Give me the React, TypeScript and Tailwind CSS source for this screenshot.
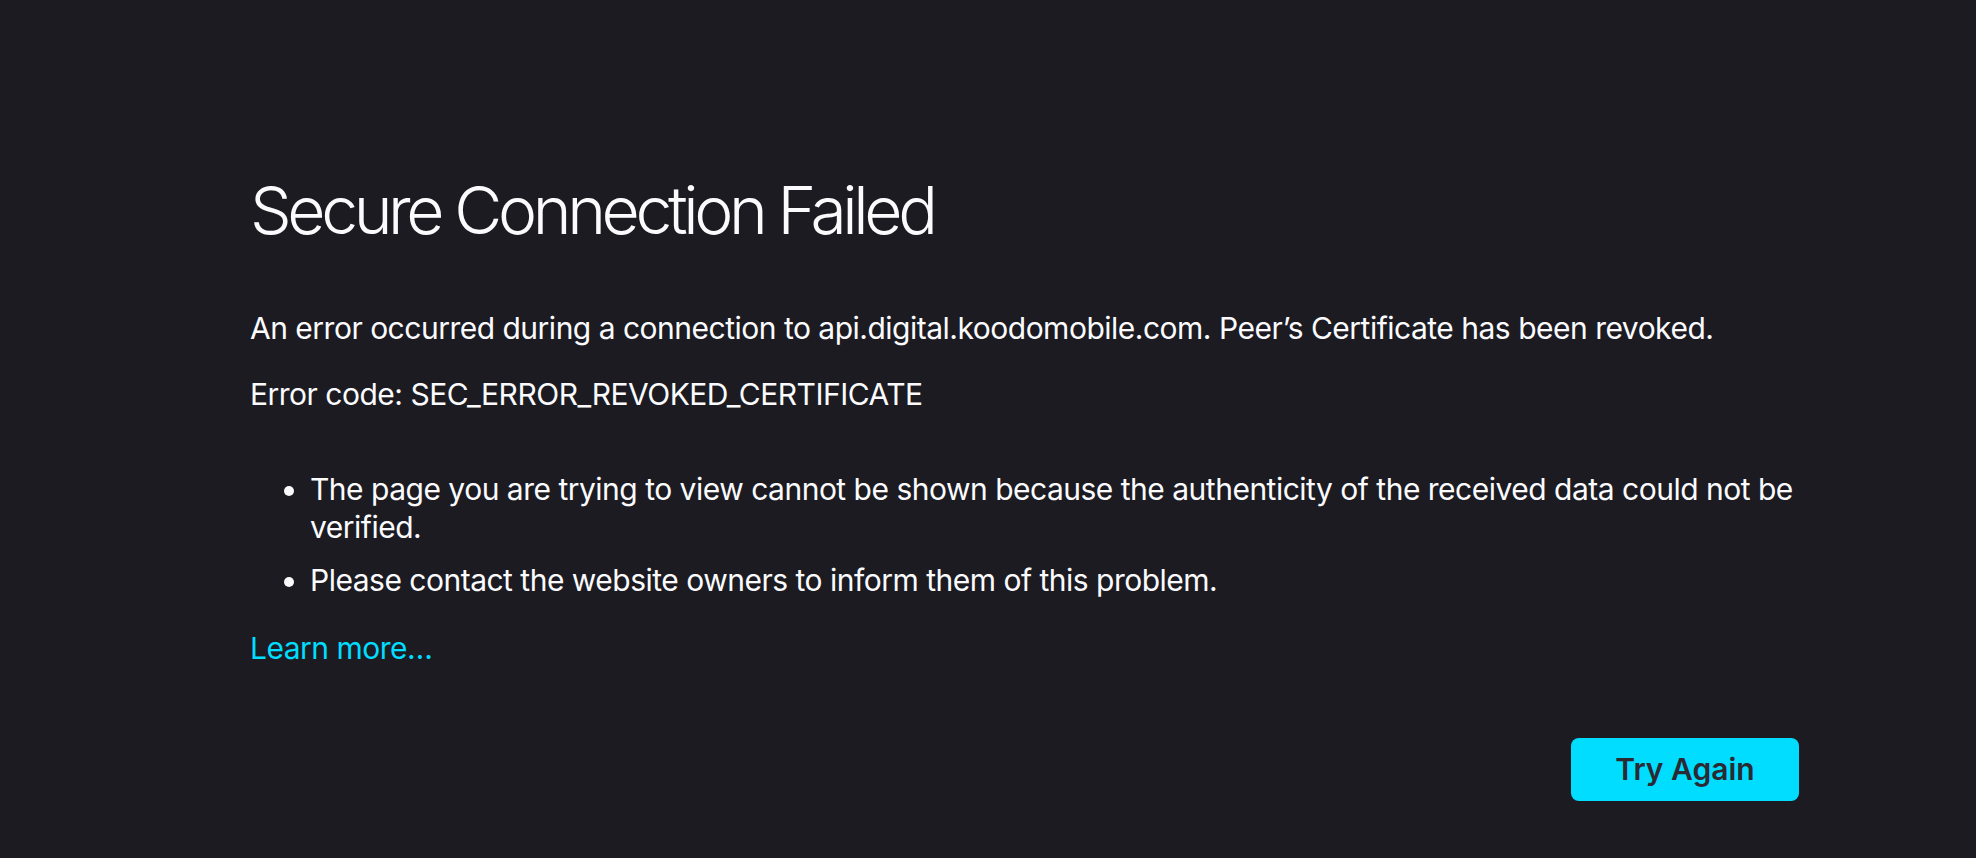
export default function App() {
  return (
    <div className="min-h-screen bg-[#1c1b22] text-[#fbfbfe] font-['Inter','Noto_Sans',sans-serif]">
      <div className="w-[1549px] ml-[250px] pt-[177px] pb-10">
        {/* Title */}
        <h1 className="text-[66px] font-light leading-none tracking-[-4.4px]">Secure Connection Failed</h1>

        <div className="text-[30px] leading-[1.25] tracking-[-0.5px]">
          <p className="mt-[67px] whitespace-nowrap">
            An error occurred during a connection to api.digital.koodomobile.com. Peer’s Certificate has been revoked.
          </p>
          <p className="mt-[28px]">Error code: SEC_ERROR_REVOKED_CERTIFICATE</p>

          <ul className="mt-[58px] pl-[60px] list-disc">
            <li>
              <span className="whitespace-nowrap">
                The page you are trying to view cannot be shown because the authenticity of the received data could not be
              </span>
              <br />
              verified.
            </li>
            <li className="mt-[16px]">Please contact the website owners to inform them of this problem.</li>
          </ul>

          <a href="#" className="block mt-[30px] text-[#00ddff]">
            Learn more…
          </a>
        </div>

        {/* Actions */}
        <div className="flex justify-end mt-[71px]">
          <button className="w-[228px] h-[63px] rounded-[8px] bg-[#00ddff] text-[#2b2a33] text-[30px] font-semibold">
            Try Again
          </button>
        </div>
      </div>
    </div>
  )
}
